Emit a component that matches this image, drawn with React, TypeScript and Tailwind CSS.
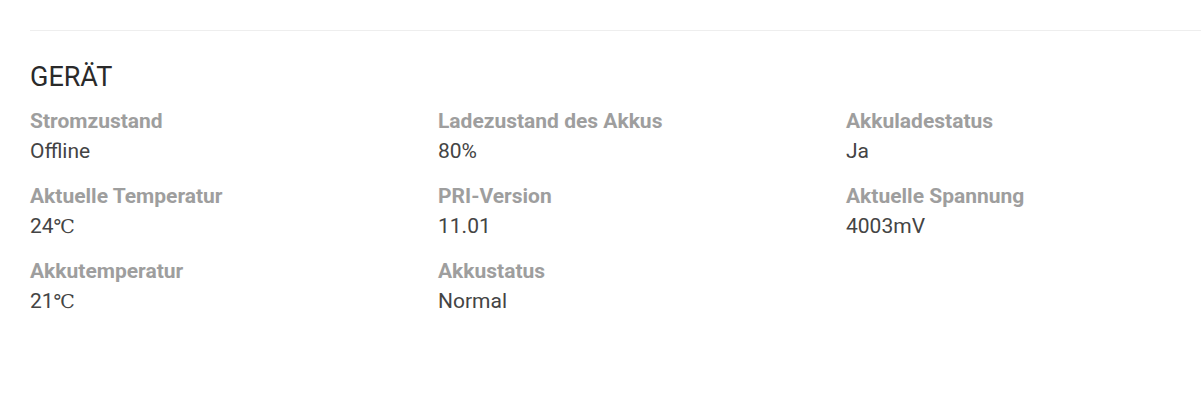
const rows = [
  [
    { label: 'Stromzustand', value: 'Offline' },
    { label: 'Ladezustand des Akkus', value: '80%' },
    { label: 'Akkuladestatus', value: 'Ja' },
  ],
  [
    { label: 'Aktuelle Temperatur', value: '24', unit: '℃' },
    { label: 'PRI-Version', value: '11.01' },
    { label: 'Aktuelle Spannung', value: '4003mV' },
  ],
  [
    { label: 'Akkutemperatur', value: '21', unit: '℃' },
    { label: 'Akkustatus', value: 'Normal' },
  ],
]

function Field({ label, value, unit }: { label: string; value: string; unit?: string }) {
  return (
    <div>
      <div className="text-[21px] leading-[30px] font-bold text-[#9e9e9e]">{label}</div>
      <div className="text-[21px] leading-[30px] text-[#444444]">
        {value}
        {unit && <span className="font-['DejaVu_Serif',serif] text-[19px]">{unit}</span>}
      </div>
    </div>
  )
}

export default function App() {
  return (
    <div className="min-h-screen bg-white font-['Roboto',sans-serif] overflow-hidden">
      <div className="pl-[30px] pt-[30px]">
        <div className="border-t border-[#eeeeee]" />
        <h2 className="mt-[27px] text-[27px] leading-[38px] text-[#2a2a2a]">GERÄT</h2>
        <div className="mt-[10px] flex flex-col gap-[15px]">
          {rows.map((row, i) => (
            <div key={i} className="grid grid-cols-[408px_408px_408px]">
              {row.map((f) => (
                <Field key={f.label} {...f} />
              ))}
            </div>
          ))}
        </div>
      </div>
    </div>
  )
}
